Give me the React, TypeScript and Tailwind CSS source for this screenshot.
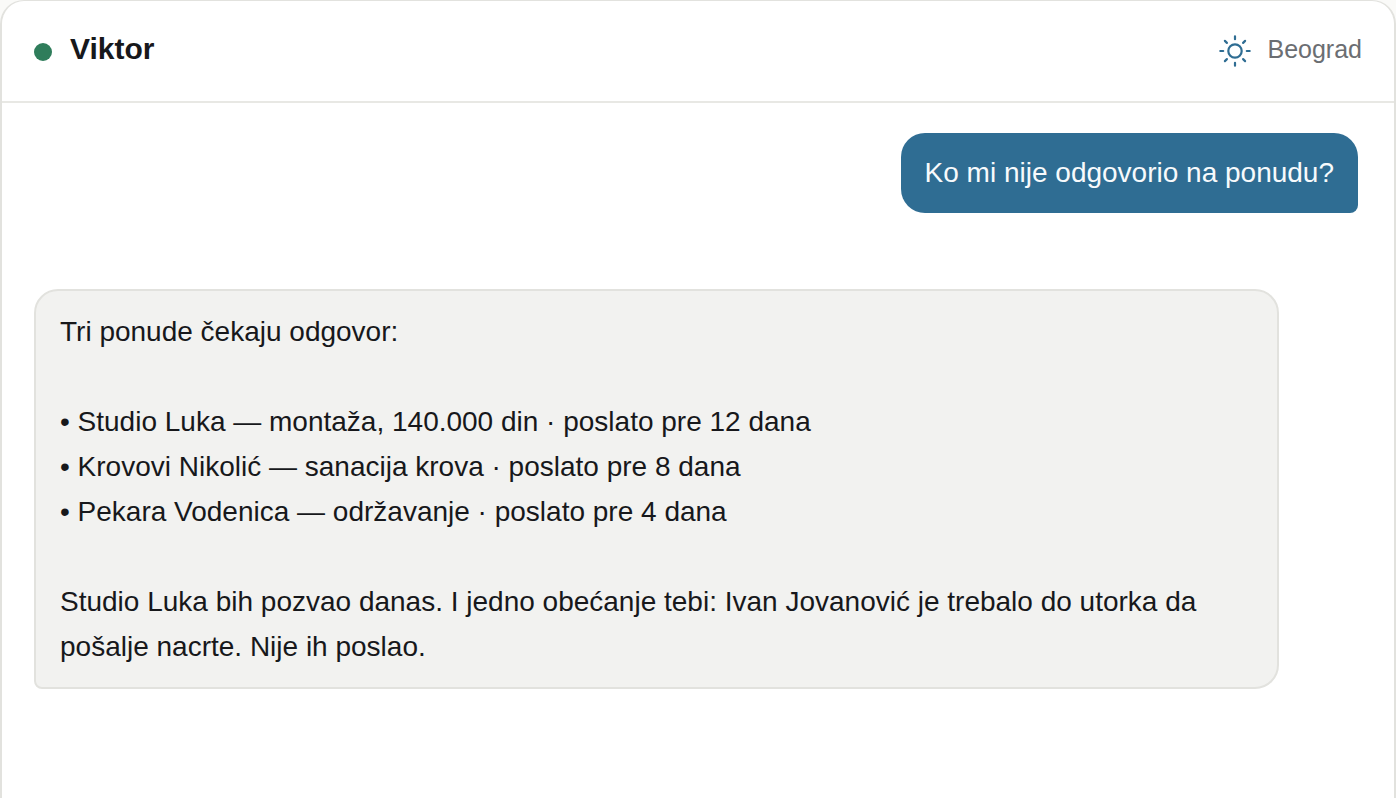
import { clsx } from 'clsx';

interface Message {
  id: number;
  from: 'user' | 'assistant';
  text: string;
}

const messages: Message[] = [
  { id: 1, from: 'user', text: 'Ko mi nije odgovorio na ponudu?' },
  {
    id: 2,
    from: 'assistant',
    text: [
      'Tri ponude čekaju odgovor:',
      '',
      '• Studio Luka — montaža, 140.000 din · poslato pre 12 dana',
      '• Krovovi Nikolić — sanacija krova · poslato pre 8 dana',
      '• Pekara Vodenica — održavanje · poslato pre 4 dana',
      '',
      'Studio Luka bih pozvao danas. I jedno obećanje tebi: Ivan Jovanović je trebalo do utorka da pošalje nacrte. Nije ih poslao.',
    ].join('\n'),
  },
];

function SunIcon() {
  return (
    <svg
      className="size-8 text-[#2f6d93]"
      viewBox="0 0 32 32"
      fill="none"
      stroke="currentColor"
      strokeWidth="2.2"
      strokeLinecap="round"
      aria-hidden="true"
    >
      <circle cx="16" cy="16" r="6.7" />
      <path d="M16 1.3v2.9M16 27.8v2.9M1.3 16h2.9M27.8 16h2.9M5.9 5.9l2 2M24.1 24.1l2 2M5.9 26.1l2-2M24.1 7.9l2-2" />
    </svg>
  );
}

function ChatHeader() {
  return (
    <header className="flex items-center justify-between border-b-2 border-[#e8e8e4] px-8 pt-7 pb-8">
      <div className="flex items-center gap-[18px]">
        <span className="mt-1.5 size-[18px] rounded-full bg-[#2f7d5b]" />
        <h1 className="text-[30px] leading-10 font-bold">Viktor</h1>
      </div>
      <div className="flex items-center gap-4">
        <span className="mt-1">
          <SunIcon />
        </span>
        <span className="text-[25px] leading-10 text-[#6b6e72]">Beograd</span>
      </div>
    </header>
  );
}

function Bubble({ message }: { message: Message }) {
  const isUser = message.from === 'user';

  return (
    <div
      className={clsx(
        'rounded-3xl px-6 py-[18px] text-[28px] whitespace-pre-line',
        isUser
          ? 'self-end rounded-br-lg bg-[#2f6d93] leading-[44px] text-[#f7fafc]'
          : 'w-[94%] self-start rounded-bl-lg border-2 border-[#e2e2de] bg-[#f2f2f0] leading-[45px]'
      )}
    >
      {message.text}
    </div>
  );
}

export default function App() {
  return (
    <div className="min-h-screen bg-[#fafaf8] font-['Liberation_Sans',Arial,sans-serif] text-[#17181b]">
      <main className="min-h-screen rounded-t-3xl border-x-2 border-t border-[#e2e2de] bg-white">
        <ChatHeader />
        <div className="flex flex-col gap-[76px] pt-[30px] pr-9 pb-8 pl-8">
          {messages.map((message) => (
            <Bubble key={message.id} message={message} />
          ))}
        </div>
      </main>
    </div>
  );
}
